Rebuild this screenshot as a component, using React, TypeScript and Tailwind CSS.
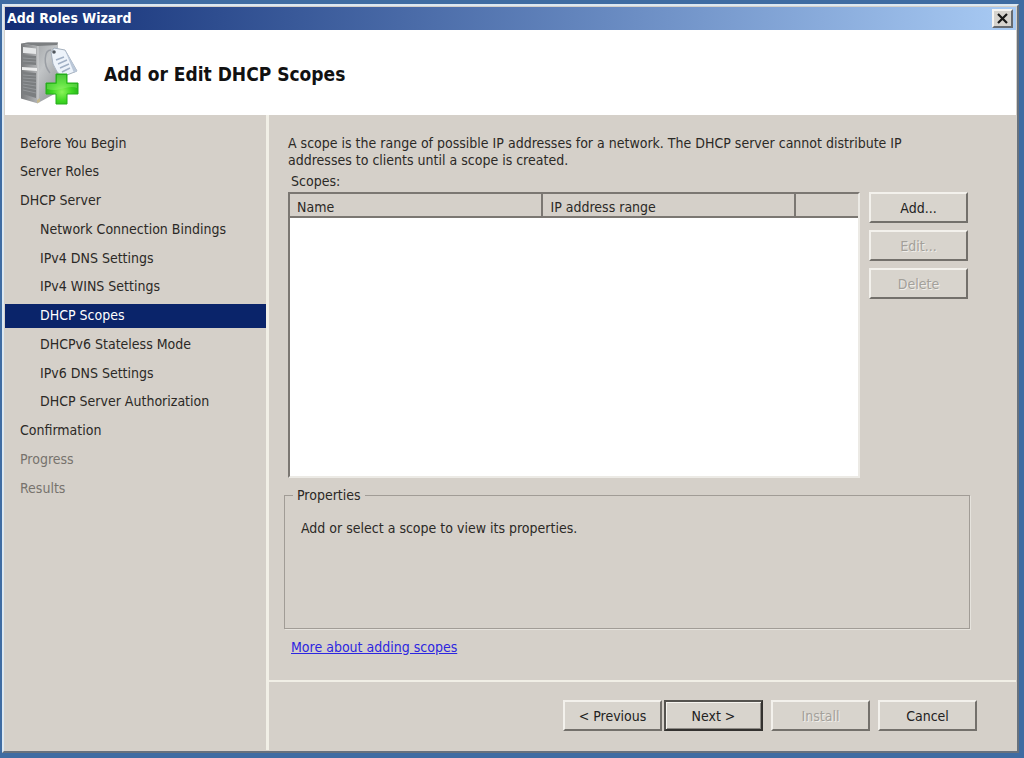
import React, { useState } from 'react';

interface Step {
    label: string;
    nested?: boolean;
    disabled?: boolean;
}

interface WizardButtonProps {
    children: React.ReactNode;
    disabled?: boolean;
    isDefault?: boolean;
}

const steps: Step[] = [
    { label: 'Before You Begin' },
    { label: 'Server Roles' },
    { label: 'DHCP Server' },
    { label: 'Network Connection Bindings', nested: true },
    { label: 'IPv4 DNS Settings', nested: true },
    { label: 'IPv4 WINS Settings', nested: true },
    { label: 'DHCP Scopes', nested: true },
    { label: 'DHCPv6 Stateless Mode', nested: true },
    { label: 'IPv6 DNS Settings', nested: true },
    { label: 'DHCP Server Authorization', nested: true },
    { label: 'Confirmation' },
    { label: 'Progress', disabled: true },
    { label: 'Results', disabled: true }
];

const WizardButton: React.FC<WizardButtonProps> = ({ children, disabled, isDefault }) => (
    <button
        type="button"
        disabled={disabled}
        className={`h-[31px] w-[99px] shrink-0 border-2 bg-[#d8d4cd] pt-0.5 ${isDefault
            ? 'border-t-[#55534f] border-l-[#55534f] border-r-[#33312f] border-b-[#33312f] shadow-[inset_1px_1px_0_#f6f4ef,inset_-1px_-1px_0_#8d8a85]'
            : 'border-t-[#f3f1ec] border-l-[#f3f1ec] border-r-[#73706b] border-b-[#73706b]'
            } ${disabled ? 'text-[#a3a09a] [text-shadow:1px_1px_0_#f0eeea]' : 'text-[#222]'}`}
    >
        {children}
    </button>
);

const ServerIcon: React.FC = () => (
    <svg className="h-16 w-[60px] shrink-0" viewBox="0 0 60 64" aria-hidden="true">
        <defs>
            <linearGradient id="side" x1="0" y1="0" x2="1" y2="1">
                <stop offset="0" stopColor="#8e9194" />
                <stop offset="0.5" stopColor="#c2c5c7" />
                <stop offset="1" stopColor="#8a8d90" />
            </linearGradient>
            <linearGradient id="front" x1="0" y1="0" x2="1" y2="0">
                <stop offset="0" stopColor="#77797b" />
                <stop offset="1" stopColor="#b3b5b7" />
            </linearGradient>
            <radialGradient id="plus" cx="0.5" cy="0.6" r="0.6">
                <stop offset="0" stopColor="#8cf45a" />
                <stop offset="0.5" stopColor="#3fd823" />
                <stop offset="1" stopColor="#1fab16" />
            </radialGradient>
        </defs>
        {/* Tower */}
        <path d="M1 1.500L8 0.500H38V50L18 61V4Z" fill="url(#side)" />
        <path d="M1 1.500L18 4V61.500L1 56.500Z" fill="url(#front)" />
        <path d="M1 1.500L8 0.500H38L37 3L18 4Z" fill="#7c7f81" />
        <path d="M3 5L16 6.500V12L3 11Z" fill="#e4e6e7" />
        <path d="M3 13L16 14V23L3 22ZM3 30L16 31V56L3 52Z" fill="#7b7e80" />
        <path d="M3 16L16 17M3 19L16 20M3 33L16 34M3 36L16 37M3 39L16 40.500M3 42L16 44M3 45L16 47.500M3 48L16 51" stroke="#94979a" />
        <path d="M2 25L17 26V29L2 28Z" fill="#eceded" />
        <path d="M18 4V61" stroke="#d0d2d3" />
        <path d="M17 58L20 56V60L17 61Z" fill="#c4b78c" />
        {/* Tag */}
        <path d="M31 8C24 8 23 23 30 31" fill="none" stroke="#9a9ea4" strokeWidth="1.500" />
        <path d="M31 10L34 6L45 8L57 29L42 35Q36 30 33 22Z" fill="#edf3fa" stroke="#a5b0bd" />
        <path d="M45 8L57 29L54 31Z" fill="#bac7d8" />
        <circle cx="34" cy="10" r="1.800" fill="#50565d" />
        <path d="M36 18L44 15M38 22L47 18M40 26L49 22M42 30L50 26" stroke="#a0afc4" strokeWidth="1.500" />
        {/* Plus sign */}
        <path d="M36 32H47V41H58V52H47V62H36V52H26V41H36Z" fill="url(#plus)" stroke="#27ae1c" strokeLinejoin="round" />
        <path d="M37 33H46V42H57V46C48 42 39 51 27 47V42H37Z" fill="#a4f780" opacity="0.35" />
    </svg>
);

const App: React.FC = () => {
    const [current, setCurrent] = useState<string>('DHCP Scopes');

    return (
        <div className="flex min-h-screen bg-[#3f6ca2] pt-1 pr-[5px] pb-[5px] pl-0.5 font-['DejaVu_Sans_Condensed','DejaVu_Sans',sans-serif] text-sm leading-[17px] text-[#2b2926]">
            <div className="flex flex-1 flex-col border-2 border-t-[#dce8f2] border-l-[#dce8f2] border-r-[#68717c] border-b-[#68717c] bg-[#d5d0c9] p-px">
                {/* Title bar */}
                <div className="flex h-[23px] shrink-0 items-center justify-between bg-linear-to-r from-[#132d75] to-[#a9cbf4] pr-[3px] pl-0.5">
                    <span className="font-bold text-white">Add Roles Wizard</span>
                    <button
                        type="button"
                        aria-label="Close"
                        className="flex h-[19px] w-[21px] items-center justify-center border-2 border-t-[#f6f4f1] border-l-[#f6f4f1] border-r-[#666a70] border-b-[#666a70] bg-[#d6d3ce]"
                    >
                        <svg className="h-[11px] w-[11px]" viewBox="0 0 11 11" aria-hidden="true">
                            <path d="M1 1L10 10M10 1L1 10" stroke="#181818" strokeWidth="2.200" />
                        </svg>
                    </button>
                </div>

                {/* Header */}
                <header className="flex h-[85px] shrink-0 items-center gap-6 bg-white px-[15px] pt-0.5">
                    <ServerIcon />
                    <h1 className="text-[19px] leading-6 font-bold text-[#111]">Add or Edit DHCP Scopes</h1>
                </header>

                <div className="flex flex-1">
                    {/* Step list */}
                    <nav className="w-[264px] shrink-0 border-r-[3px] border-[#f1efe6] pt-4">
                        <ul className="flex h-[369px] flex-col justify-between">
                            {steps.map((step) => (
                                <li key={step.label}>
                                    <button
                                        type="button"
                                        disabled={step.disabled}
                                        onClick={() => setCurrent(step.label)}
                                        className={`block h-6 w-full text-left ${step.nested ? 'pl-[35px]' : 'pl-[15px]'} ${current === step.label ? 'bg-[#0a246a] text-white' : ''
                                            } ${step.disabled ? 'text-[#77736d]' : ''}`}
                                    >
                                        {step.label}
                                    </button>
                                </li>
                            ))}
                        </ul>
                    </nav>

                    <div className="flex min-w-0 flex-1 flex-col">
                        <main className="flex flex-1 flex-col pt-5 pr-[46px] pl-[15px]">
                            <p className="pr-8 pl-1">
                                A scope is the range of possible IP addresses for a network. The DHCP server cannot distribute IP
                                addresses to clients until a scope is created.
                            </p>
                            <h2 id="scopes-label" className="mt-1 pl-[7px]">Scopes:</h2>

                            {/* Scope list */}
                            <div className="mt-0.5 flex min-h-[286px] gap-[9px] pr-0.5 pl-1">
                                <div className="min-w-0 flex-1 border-2 border-t-[#7b7772] border-l-[#7b7772] border-r-[#eceae5] border-b-[#eceae5] bg-white">
                                    <table aria-labelledby="scopes-label" className="w-full table-fixed border-collapse">
                                        <thead>
                                            <tr className="h-[23px] border-b-2 border-[#7b7772] bg-[#d5d0c9] text-left">
                                                <th className="w-4/9 border-r-2 border-[#7b7772] pt-1 pl-[7px] font-normal">Name</th>
                                                <th className="w-4/9 border-r-2 border-[#7b7772] pt-1 pl-[7px] font-normal">IP address range</th>
                                                <td></td>
                                            </tr>
                                        </thead>
                                    </table>
                                </div>
                                <div className="flex flex-col gap-[7px]">
                                    <WizardButton>Add...</WizardButton>
                                    <WizardButton disabled>Edit...</WizardButton>
                                    <WizardButton disabled>Delete</WizardButton>
                                </div>
                            </div>

                            {/* Properties */}
                            <fieldset className="mt-[9px] h-[142px] border border-[#a19c96] px-4 shadow-[1px_1px_0_#e6e3dd]">
                                <legend className="-ml-2 px-1">Properties</legend>
                                <p className="mt-4">Add or select a scope to view its properties.</p>
                            </fieldset>

                            <a href="#more" className="mt-2.5 ml-[7px] self-start text-[#2c26e0] underline">
                                More about adding scopes
                            </a>
                        </main>

                        <footer className="flex h-[70px] shrink-0 justify-end border-t-2 border-[#f1efe6] pt-[18px] pr-[39px]">
                            <div className="flex gap-0.5">
                                <WizardButton>&lt; Previous</WizardButton>
                                <WizardButton isDefault>Next &gt;</WizardButton>
                            </div>
                            <div className="ml-2 flex gap-2">
                                <WizardButton disabled>Install</WizardButton>
                                <WizardButton>Cancel</WizardButton>
                            </div>
                        </footer>
                    </div>
                </div>
            </div>
        </div>
    );
};

export default App;
